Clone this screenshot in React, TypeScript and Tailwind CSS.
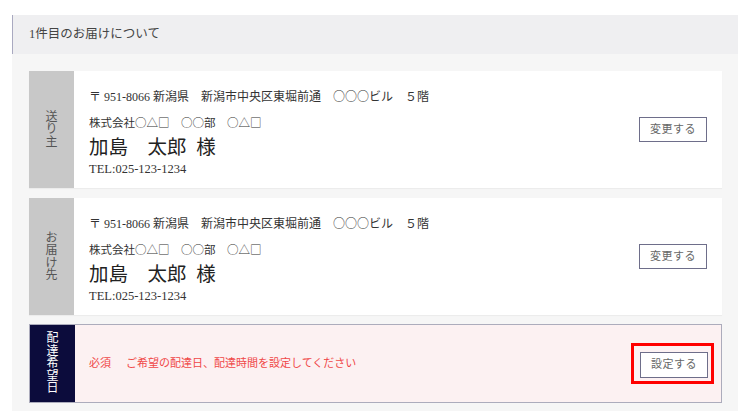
const FONT = "font-['Liberation_Serif','Noto_Sans_CJK_JP',serif]";
const CJK = "font-['Noto_Sans_CJK_JP',sans-serif]";

type Person = {
  label: string;
};

const people: Person[] = [{ label: "送り主" }, { label: "お届け先" }];

const Sym: React.FC<{ children: React.ReactNode }> = ({ children }) => (
  <span className={CJK}>{children}</span>
);

const VerticalLabel: React.FC<{ text: string; dark?: boolean }> = ({ text, dark }) => {
  return (
    <div
      className={`w-[45px] shrink-0 flex flex-col items-center justify-center text-[12px] leading-[12.5px] ${
        dark ? "bg-[#0c0c3c] text-white" : "bg-[#c8c8c8] text-[#555]"
      }`}
    >
      {text.split("").map((c, i) => (
        <span key={i} className="block h-[12.5px]">
          {c}
        </span>
      ))}
    </div>
  );
};

const PersonCard: React.FC<{ p: Person }> = ({ p }) => {
  return (
    <div className="flex bg-white h-[117px] shadow-[0_1px_1px_rgba(0,0,0,0.04)]">
      <VerticalLabel text={p.label} />
      <div className="flex flex-1 items-center justify-between pl-[15px] pr-[15px]">
        <div className="flex flex-col self-start pt-[14px] text-[#333]">
          <div className="text-[12px] leading-[22px] whitespace-pre">
            〒 951-8066 新潟県　新潟市中央区東堀前通　<Sym>○○○</Sym>ビル　５階
          </div>
          <div className="mt-[3px] text-[11.5px] leading-[22px] whitespace-pre">
            株式会社<Sym>○△□</Sym>　<Sym>○○</Sym>部　<Sym>○△□</Sym>
          </div>
          <div className="text-[19.5px] leading-[28px] whitespace-pre text-[#222]">加島　太郎  様</div>
          <div className="text-[12.5px] leading-[14px]">TEL:025-123-1234</div>
        </div>
        <button className="w-[68px] h-[25px] border border-[#6e6e8a] bg-white text-[11px] text-[#666] tracking-[0.5px]">
          変更する
        </button>
      </div>
    </div>
  );
};

export default function App() {
  return (
    <div className={`bg-white min-h-[411px] px-3 pt-[15px] ${FONT}`}>
      <div className="h-[39px] flex items-center bg-[#efeff1] border-l border-[#a9a9c0] pl-4 text-[12.5px] text-[#444]">
        1件目のお届けについて
      </div>
      <div className="bg-[#f6f6f6] px-[17px] pt-[17px] pb-4 pr-[16px] flex flex-col gap-[10px]">
        {people.map((p, i) => (
          <PersonCard key={i} p={p} />
        ))}
        <div className="flex h-[79px] border border-[#acacbc] -mt-[1px]">
          <VerticalLabel text="配達希望日" dark />
          <div className="flex flex-1 items-center justify-between bg-[#fcf1f2] pl-[14px] pr-[7px]">
            <div className="text-[11px] text-[#f04848] whitespace-pre">
              <span className="mr-[15px]">必須</span>ご希望の配達日、配達時間を設定してください
            </div>
            <div className="border-[3px] border-[#ff0000] pl-[6px] pr-[3px] pt-[5px] pb-[3px]">
              <button className="w-[68px] h-[26px] border border-[#6e6e8a] bg-white text-[11px] text-[#666] tracking-[0.5px]">
                設定する
              </button>
            </div>
          </div>
        </div>
      </div>
    </div>
  );
}
